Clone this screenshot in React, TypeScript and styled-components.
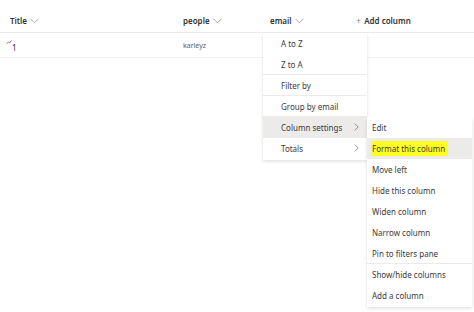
import React from "react";
import styled, { createGlobalStyle } from "styled-components";

const GlobalStyle = createGlobalStyle`
  html, body {
    margin: 0;
    padding: 0;
    background: #fff;
    font-family: "Noto Sans", "Open Sans", sans-serif;
    color: #323130;
  }
`;

const mainItems = [
  { label: "A to Z" },
  { label: "Z to A", divider: true },
  { label: "Filter by", divider: true },
  { label: "Group by email", divider: true },
  { label: "Column settings", sub: true, active: true },
  { label: "Totals", sub: true },
];

const subItems = [
  { label: "Edit" },
  { label: "Format this column", active: true, marker: true },
  { label: "Move left" },
  { label: "Hide this column" },
  { label: "Widen column" },
  { label: "Narrow column" },
  { label: "Pin to filters pane", divider: true },
  { label: "Show/hide columns" },
  { label: "Add a column" },
];

const Chevron = ({ dir = "down" }: { dir?: "down" | "right" }) =>
  dir === "down" ? (
    <svg width="9" height="6" viewBox="0 0 9 6">
      <path d="M0.5 0.8 L4.5 4.8 L8.5 0.8" fill="none" stroke="#a19f9d" strokeWidth="0.9" />
    </svg>
  ) : (
    <svg width="5" height="8" viewBox="0 0 5 8">
      <path d="M0.7 0.5 L4.2 4 L0.7 7.5" fill="none" stroke="#8a8886" strokeWidth="0.9" />
    </svg>
  );

const App: React.FC = () => {
  return (
    <Page>
      <GlobalStyle />
      <HeaderRow>
        <HeadCell $w={183} $pl={10}>
          Title <Chevron />
        </HeadCell>
        <HeadCell $w={87}>
          people <Chevron />
        </HeadCell>
        <HeadCell $w={86}>
          email <Chevron />
        </HeadCell>
        <AddColumn>
          <Plus>+</Plus> Add column
        </AddColumn>
      </HeaderRow>
      <DataRow>
        <Cell $w={183} $pl={6}>
          <ItemIcon>
            <svg width="6" height="5" viewBox="0 0 6 5">
              <path d="M0.5 3.5 L2.5 2 L3.5 3 L5.5 0.5" fill="none" stroke="#605e5c" strokeWidth="0.8" />
            </svg>
            <One>1</One>
          </ItemIcon>
        </Cell>
        <Cell $w={87}>
          <Person>karleyz</Person>
        </Cell>
      </DataRow>

      <Menu $left={263} $top={33} $width={104}>
        {mainItems.map((it) => (
          <MenuItem key={it.label} $active={it.active} $pl={18} $divider={it.divider}>
            <span>{it.label}</span>
            {it.sub && <Chevron dir="right" />}
          </MenuItem>
        ))}
      </Menu>

      <Menu $left={367} $top={117} $width={105}>
        {subItems.map((it) => (
          <MenuItem key={it.label} $active={it.active} $pl={5} $divider={it.divider}>
            {it.marker ? <Marker>{it.label}</Marker> : <span>{it.label}</span>}
          </MenuItem>
        ))}
      </Menu>
    </Page>
  );
};

export default App;

const Page = styled.div`
  position: relative;
  width: 474px;
  height: 312px;
  overflow: hidden;
`;

const HeaderRow = styled.div`
  display: flex;
  align-items: center;
  height: 33px;
  padding-top: 9px;
  box-sizing: border-box;
  border-bottom: 1px solid #edebe9;
`;

const HeadCell = styled.div<{ $w: number; $pl?: number }>`
  width: ${(p) => p.$w}px;
  padding-left: ${(p) => p.$pl ?? 0}px;
  box-sizing: border-box;
  display: flex;
  align-items: center;
  gap: 3px;
  font-size: 8px;
  font-weight: 600;
  color: #323130;

  svg {
    margin-top: 1px;
  }
`;

const AddColumn = styled.div`
  display: flex;
  align-items: center;
  gap: 3px;
  font-size: 8px;
  font-weight: 600;
  color: #323130;
`;

const Plus = styled.span`
  font-weight: 400;
  color: #8a8886;
  font-size: 9px;
`;

const DataRow = styled.div`
  display: flex;
  align-items: center;
  height: 24px;
  border-bottom: 1px solid #f3f2f1;
`;

const Cell = styled.div<{ $w: number; $pl?: number }>`
  width: ${(p) => p.$w}px;
  padding-left: ${(p) => p.$pl ?? 0}px;
  box-sizing: border-box;
  display: flex;
  align-items: center;
`;

const ItemIcon = styled.div`
  display: flex;
  align-items: flex-start;
  height: 11px;
`;

const One = styled.span`
  font-size: 8px;
  color: #323130;
  line-height: 10px;
  margin-top: 3px;
`;

const Person = styled.span`
  font-size: 7px;
  color: #605e5c;
`;

const Menu = styled.div<{ $left: number; $top: number; $width: number }>`
  position: absolute;
  left: ${(p) => p.$left}px;
  top: ${(p) => p.$top}px;
  width: ${(p) => p.$width}px;
  background: #fff;
  box-shadow: 0 1.6px 3.6px rgba(0, 0, 0, 0.13), 0 0.3px 0.9px rgba(0, 0, 0, 0.11);
  display: flex;
  flex-direction: column;
  padding-bottom: 1px;
`;

const MenuItem = styled.div<{ $active?: boolean; $pl: number; $divider?: boolean }>`
  height: 21px;
  box-sizing: border-box;
  display: flex;
  align-items: center;
  justify-content: space-between;
  padding: 0 6px 0 ${(p) => p.$pl}px;
  font-size: 8px;
  color: #3b3a39;
  background: ${(p) => (p.$active ? "#edebe9" : "#fff")};
  border-bottom: 1px solid ${(p) => (p.$divider ? "#edebe9" : "transparent")};

  svg {
    margin-right: 2px;
  }
`;

const Marker = styled.span`
  background: #ffff1f;
  padding: 2px 3px 2px 1px;
  margin-left: -1px;
  border-radius: 3px;
`;
